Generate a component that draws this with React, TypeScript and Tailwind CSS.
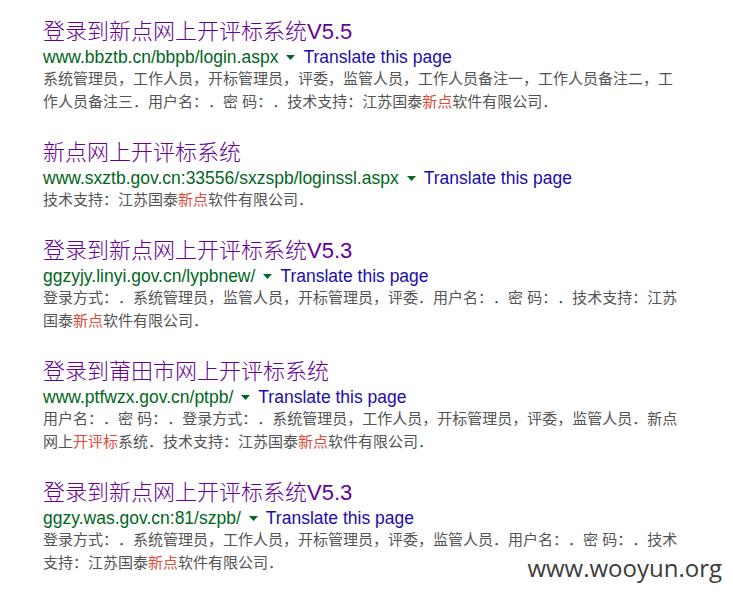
import React from "react";

// search results shown in the screenshot
type Part = string | { hl: string };

const results: { title: string; url: string; snippet: Part[] }[] = [
  {
    title: "登录到新点网上开评标系统V5.5",
    url: "www.bbztb.cn/bbpb/login.aspx",
    snippet: [
      "系统管理员，工作人员，开标管理员，评委，监管人员，工作人员备注一，工作人员备注二，工作人员备注三．用户名：．密 码：．技术支持：江苏国泰",
      { hl: "新点" },
      "软件有限公司．",
    ],
  },
  {
    title: "新点网上开评标系统",
    url: "www.sxztb.gov.cn:33556/sxzspb/loginssl.aspx",
    snippet: ["技术支持：江苏国泰", { hl: "新点" }, "软件有限公司．"],
  },
  {
    title: "登录到新点网上开评标系统V5.3",
    url: "ggzyjy.linyi.gov.cn/lypbnew/",
    snippet: [
      "登录方式：．系统管理员，监管人员，开标管理员，评委．用户名：．密 码：．技术支持：江苏国泰",
      { hl: "新点" },
      "软件有限公司．",
    ],
  },
  {
    title: "登录到莆田市网上开评标系统",
    url: "www.ptfwzx.gov.cn/ptpb/",
    snippet: [
      "用户名：．密 码：．登录方式：．系统管理员，工作人员，开标管理员，评委，监管人员．新点网上",
      { hl: "开评标" },
      "系统．技术支持：江苏国泰",
      { hl: "新点" },
      "软件有限公司．",
    ],
  },
  {
    title: "登录到新点网上开评标系统V5.3",
    url: "ggzy.was.gov.cn:81/szpb/",
    snippet: [
      "登录方式：．系统管理员，工作人员，开标管理员，评委，监管人员．用户名：．密 码：．技术支持：江苏国泰",
      { hl: "新点" },
      "软件有限公司．",
    ],
  },
];

const font = "font-['Liberation_Sans','Noto_Sans_CJK_SC',sans-serif]";

function Result({ title, url, snippet }: (typeof results)[number]) {
  return (
    <div className="flex flex-col">
      <a className="text-[22px] font-light leading-[26px] text-[#660099]">{title}</a>
      <div className="mt-[3px] flex items-center text-[17.5px] leading-[19px]">
        <span className="text-[#006621]">{url}</span>
        <svg width="9" height="5" viewBox="0 0 9 5" className="ml-[8px] mr-[8px]">
          <path d="M0 0h9L4.5 5z" fill="#006621" />
        </svg>
        <span className="text-[#1a0dab]">Translate this page</span>
      </div>
      <p className="w-[640px] text-[15px] leading-[23px] text-[#545454] [text-spacing-trim:space-all]">
        {snippet.map((p, i) =>
          typeof p === "string" ? (
            <span key={i}>{p}</span>
          ) : (
            <span key={i} className="text-[#dd4b39]">
              {p.hl}
            </span>
          )
        )}
      </p>
    </div>
  );
}

export default function App() {
  return (
    <div className={`relative w-[733px] h-[597px] overflow-hidden bg-white ${font}`}>
      <div className="flex flex-col gap-[27px] pl-[43px] pt-[19px]">
        {results.map((r, i) => (
          <Result key={i} {...r} />
        ))}
      </div>
      {/* site watermark */}
      <div className="absolute right-[11px] top-[552px] font-['Open_Sans',sans-serif] text-[24px] leading-[32px] text-[#3c3c3c]">
        www.wooyun.org
      </div>
    </div>
  );
}
